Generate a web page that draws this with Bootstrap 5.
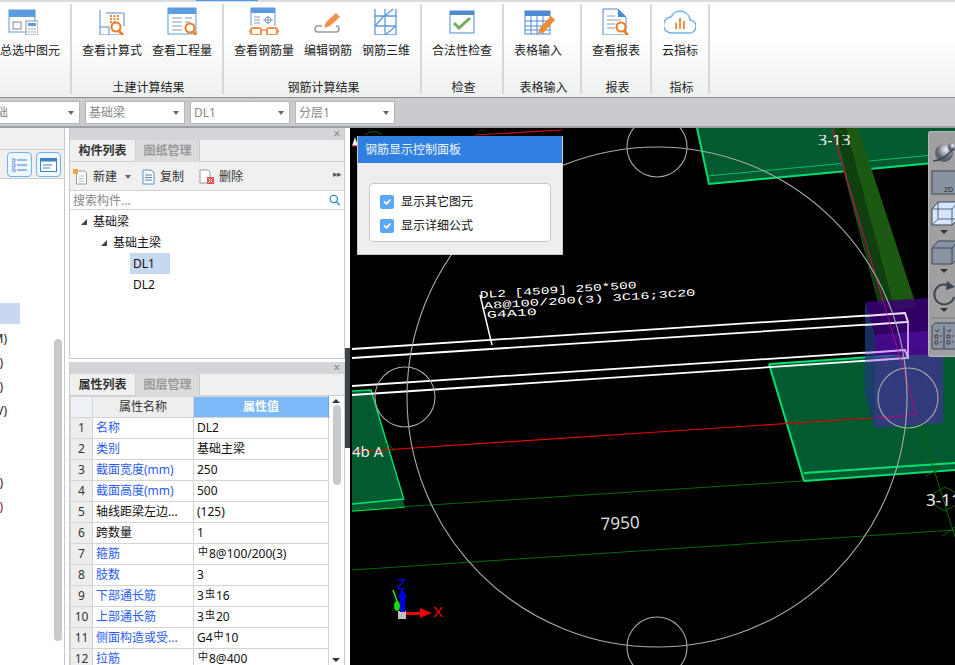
<!DOCTYPE html>
<html lang="en">
<head>
  <meta charset="UTF-8" />
  <title>钢筋计算结果</title>
  <meta name="viewport" content="width=device-width, initial-scale=1" />
  <link href="https://cdn.jsdelivr.net/npm/bootstrap@5.3.0/dist/css/bootstrap.min.css" rel="stylesheet"/>
  <style>
    html, body { height: 665px; overflow: hidden; }
    body { font-family: "Noto Sans", "Noto Sans CJK SC", sans-serif; font-size: 12px; line-height: 1.2; color: #222; background: #fff; }

    /* ribbon */
    .ribbon { height: 98px; border-top: 2px solid #dcdcdc; border-bottom: 1px solid #8c8f92; background: linear-gradient(#fff 35%, #eef0f0); position: relative; flex: none; }
    .ribbon-active { position: absolute; left: 196px; top: -2px; width: 62px; height: 1px; background: #4a9cf0; }
    .rb-group { border-right: 2px solid #d6d8d8; margin: 2px 0; padding: 0 10px; flex: none; height: 90px; position: relative; column-gap: 10px; }
    .rb-first { width: 72px; padding-left: 0; overflow: hidden; }
    .rb-table { width: 78px; padding-right: 0; }
    .rb-item { flex: none; white-space: nowrap; text-align: center; }
    .rb-item-table { width: 48px; }
    .rb-icon { display: block; height: 33px; margin: -2px auto 9px; }
    .rb-icon-first { margin-left: 20px; }
    .rb-icon-table { margin-left: 10px; }
    .rb-title { position: absolute; bottom: -1px; left: 3px; right: 0; text-align: center; height: 14px; line-height: 14px; color: #222; white-space: nowrap; }
    .rb-first .rb-item { margin-left: -12px; }

    /* combo row */
    .combo-bar { height: 30px; background: #c9cbce; border-bottom: 2px solid #9da1a4; padding: 3px 0 0; column-gap: 5px; flex: none; }
    .combo { width: 100px; height: 23px; background: #fff; border: 1px solid #b4b6b8; color: #888; padding: 1px 3px 0; }
    .combo-first { width: 80px; border-left: 0; padding-left: 0; }
    .combo-cut { margin-left: -4px; }
    .caret-down { width: 0; height: 0; border-left: 3px solid transparent; border-right: 3px solid transparent; border-top: 4px solid #666; flex: none; margin-right: 2px; }

    /* panels */
    .main-area { height: 537px; flex: none; }
    .left-pane { width: 65px; border-right: 1px solid #c8c8c8; position: relative; flex: none; }
    .left-head { height: 22px; background: #f0f0f0; border-bottom: 1px solid #ccc; }
    .left-tools { height: 29px; background: #f0f0f0; border-bottom: 1px solid #ccc; padding: 2px 0 0 7px; gap: 4px; }
    .view-btn { width: 25px; height: 25px; border: 1px solid #6fb2f2; border-radius: 4px; background: #eef6fe; }
    .left-rows { padding-top: 124px; }
    .left-row { height: 24px; width: 7px; overflow: hidden; white-space: nowrap; }
    .left-row-tight { width: 3px; }
    .left-row-dark { color: #80104a; }
    .left-row-sel { width: 20px; height: 21px; background: #c7d8f0; margin-bottom: 3px; }
    .left-scroll { position: absolute; left: 54px; top: 211px; width: 8px; height: 302px; border-radius: 4px; background: #c9c9c9; }

    .mid-pane { width: 276px; margin-left: 4px; flex: none; }
    .pane-top { height: 231px; border: 1px solid #c8cacc; border-top: 0; }
    .pane-bottom { height: 303px; margin-top: 3px; border-left: 1px solid #c8cacc; border-right: 1px solid #c8cacc; overflow: hidden; position: relative; }
    .pane-title { height: 12px; background: #d3d5d8; color: #888; font-size: 12px; line-height: 11px; text-align: right; padding-right: 4px; }
    .tab-row { height: 22px; background: #f0f0f0; border-bottom: 1px solid #d0d0d0; }
    .tab-on { width: 65px; height: 22px; font-weight: 700; text-align: center; line-height: 22px; color: #333; }
    .tab-off { width: 65px; height: 22px; text-align: center; line-height: 21px; color: #999; background: #dcdcdc; border-left: 1px solid #ccc; border-right: 1px solid #ccc; font-weight: 700; }
    .tool-row { height: 29px; background: #f0f0f0; border-bottom: 1px solid #d0d0d0; padding: 2px 0 0 3px; color: #333; position: relative; }
    .tool-more { position: absolute; right: 3px; top: 7px; font-size: 9px; color: #555; letter-spacing: -1px; }
    .tool-new-caret { margin-right: 11px; }
    .tool-copy { margin-right: 15px; }
    .search-row { height: 19px; border-bottom: 1px solid #d0d0d0; padding: 0 4px 0 3px; }
    .search-input { border: 0; padding: 2px 0 0; font-size: 12px; height: 18px; border-radius: 0; color: #333; box-shadow: none; background: transparent; font-family: inherit; }
    .search-input::placeholder { color: #888; }
    .tree-list { margin-top: 1px; }
    .tree-row { height: 21px; line-height: 21px; color: #111; }
    .tree-caret { width: 0; height: 0; border-left: 6px solid transparent; border-bottom: 6px solid #444; margin-right: 6px; flex: none; }
    .tree-lv1 { padding-left: 11px; }
    .tree-lv2 { padding-left: 31px; }
    .tree-leaf { margin-left: 60px; width: 40px; padding-left: 3px; }
    .tree-sel { background: #c7d8f0; }

    .prop-table { table-layout: fixed; width: 258px; font-size: 12px; border-color: #d4d4d4; }
    .prop-table > * > tr > * { height: 21px; padding: 0 3px; line-height: 20px; color: #111; white-space: nowrap; overflow: hidden; background: #fff; box-shadow: none; border-color: #d4d4d4; }
    .prop-table > thead > tr > th { font-weight: 400; text-align: center; background: #eee; color: #333; }
    .prop-table > thead > tr > th.col-value { background: #7db8f8; color: #fff; border-color: #5ea5ee; font-weight: 700; }
    .prop-table > tbody > tr > th { font-weight: 400; text-align: center; background: #eee; color: #333; padding: 0; }
    .prop-table > tbody > tr > td.prop-link { color: #2a5cf0; }
    .prop-table > thead > tr > th.col-corner { background: #eef2f7; }
    .col-num { width: 22px; }
    .col-name { width: 101px; }
    .col-val { width: 135px; }
    .rebar { font-size: 10px; position: relative; top: -3px; margin: 0 1px; }
    .prop-scroll { position: absolute; right: 0; top: 33px; width: 15px; bottom: 0; }
    .prop-thumb { position: absolute; left: 4px; top: 10px; width: 8px; height: 80px; border-radius: 4px; background: #c9c9c9; }
    .arrow-up, .arrow-dn { position: absolute; left: 3px; width: 0; height: 0; border-left: 4px solid transparent; border-right: 4px solid transparent; }
    .arrow-up { top: 4px; border-bottom: 4px solid #333; }
    .arrow-dn { bottom: 3px; border-top: 4px solid #333; }

    .split-gap { width: 5px; position: relative; flex: none; }
    .split-bar { position: absolute; left: 0; top: 220px; width: 5px; height: 100px; background: #3f444a; }

    /* canvas */
    .cad-view { background: #000; position: relative; overflow: hidden; }
    .cad-svg { display: block; }
    .rebar-panel { position: absolute; left: 7px; top: 8px; width: 206px; height: 119px; background: #eee; border: 1px solid #c8cad0; border-top: 0; }
    .rebar-head { height: 27px; background: #2f80e0; color: #f2f7fd; line-height: 27px; padding-left: 7px; }
    .rebar-box { margin: 20px 11px 0 11px; height: 59px; background: #fff; border: 1px solid #c8c8c8; border-radius: 4px; padding: 6px 0 0 10px; }
    .rebar-check { min-height: 0; height: 24px; padding: 0; margin: 0; gap: 7px; color: #111; }
    .rebar-check .form-check-input { width: 14px; height: 14px; margin: 0; float: none; background-color: #5aa9f8; border-color: #5aa9f8; border-radius: 2px; flex: none; }
    .view-tools { position: absolute; right: 0; top: 3px; width: 27px; height: 226px; background: #a0a0a2; border-radius: 3px 0 0 3px; border: 1px solid #b8b8b8; border-right: 0; }
  </style>
</head>
<body class="d-flex flex-column">

  <!-- ribbon -->
  <div class="ribbon d-flex">
    <div class="ribbon-active"></div>

    <div class="rb-group rb-first d-flex justify-content-end">
      <div class="rb-item">
        <svg class="rb-icon rb-icon-first" width="30" height="33" viewBox="0 0 30 33">
          <rect x="1" y="8" width="26" height="22" fill="#fff" stroke="#5b9be0"/><rect x="1" y="8" width="26" height="7" fill="#5b9be0"/>
          <rect x="5" y="20" width="8" height="7" fill="none" stroke="#888"/><rect x="18" y="19" width="12" height="14" fill="#fff" stroke="#8a8f94"/>
          <rect x="20" y="21" width="8" height="3" fill="#5b9be0"/><path d="M20 27h8M20 30h8" stroke="#999" stroke-dasharray="2 1"/>
        </svg>
        汇总选中图元
      </div>
      <div class="rb-title"></div>
    </div>

    <div class="rb-group d-flex">
      <div class="rb-item">
        <svg class="rb-icon" width="30" height="33" viewBox="0 0 30 33">
          <path d="M3 8v25h24" fill="none" stroke="#4d8ad0" stroke-width="1"/><path d="M3 25h9v8" fill="none" stroke="#4d8ad0"/>
          <path d="M9 11h18v13" fill="none" stroke="#4d8ad0"/><path d="M13 14h10M13 17h10M13 20h6" stroke="#f08a30" stroke-width="2" stroke-dasharray="2 1.5"/>
          <circle cx="19" cy="25" r="4.5" fill="#fff" stroke="#f07a20" stroke-width="2"/><path d="M22 29l4 4" stroke="#f07a20" stroke-width="2.5"/>
        </svg>
        查看计算式
      </div>
      <div class="rb-item">
        <svg class="rb-icon" width="30" height="33" viewBox="0 0 30 33">
          <rect x="1" y="6" width="28" height="26" fill="#fff" stroke="#5b9be0"/><rect x="1" y="6" width="28" height="6" fill="#5b9be0"/>
          <path d="M5 16h10M5 20h10M5 24h10M5 28h10M18 16h7M18 20h5" stroke="#7d9cb8"/>
          <circle cx="23" cy="26" r="4.5" fill="#fff" stroke="#f07a20" stroke-width="2"/><path d="M26 29l3 4" stroke="#f07a20" stroke-width="2.5"/>
        </svg>
        查看工程量
      </div>
      <div class="rb-title">土建计算结果</div>
    </div>

    <div class="rb-group d-flex">
      <div class="rb-item">
        <svg class="rb-icon" width="30" height="33" viewBox="0 0 30 33">
          <path d="M2 6h24v18M2 6v18" fill="none" stroke="#5b9be0"/><rect x="2" y="6" width="24" height="5" fill="#5b9be0"/>
          <path d="M5 15h6M5 18h6M5 21h6" stroke="#7d9cb8"/><path d="M14 18h10M19 14v8" stroke="#7d9cb8"/>
          <circle cx="19" cy="18" r="3" fill="none" stroke="#7d9cb8"/>
          <rect x="2" y="26" width="10" height="7" rx="2" fill="#fff" stroke="#f4924a" stroke-width="2"/><rect x="18" y="26" width="10" height="7" rx="2" fill="#fff" stroke="#f4924a" stroke-width="2"/>
          <path d="M12 28h6M2 27l-2 3M28 27l2 3" stroke="#f4924a" stroke-width="1.5"/>
        </svg>
        查看钢筋量
      </div>
      <div class="rb-item">
        <svg class="rb-icon" width="30" height="33" viewBox="0 0 30 33">
          <path d="M9 24h-4q-3 0 -3 3t3 3h18q3 0 3 -3t-3 -3" fill="none" stroke="#9a9a9a" stroke-width="1.5"/>
          <path d="M11 26l2-6 10-9 4 4-10 9z" fill="#f4924a"/>
        </svg>
        编辑钢筋
      </div>
      <div class="rb-item">
        <svg class="rb-icon" width="30" height="33" viewBox="0 0 30 33">
          <path d="M4 7v27M14 7v27M25 7v27M4 14h21M4 24h21M4 33h21M4 24l9-10h12M14 33l11-9M14 14l8-7" fill="none" stroke="#5b9be0" stroke-width="1.3"/>
        </svg>
        钢筋三维
      </div>
      <div class="rb-title">钢筋计算结果</div>
    </div>

    <div class="rb-group">
      <div class="rb-item">
        <svg class="rb-icon" width="26" height="33" viewBox="0 0 26 33">
          <rect x="1" y="9" width="24" height="22" fill="#fff" stroke="#4d8ad0"/><rect x="1" y="9" width="24" height="4" fill="#4d8ad0"/>
          <path d="M5 21l5 5 11-10" fill="none" stroke="#6fae5a" stroke-width="3"/>
        </svg>
        合法性检查
      </div>
      <div class="rb-title">检查</div>
    </div>

    <div class="rb-group rb-table">
      <div class="rb-item rb-item-table">
        <svg class="rb-icon rb-icon-table" width="34" height="33" viewBox="0 0 34 33">
          <rect x="1" y="9" width="25" height="23" fill="#fff" stroke="#4d8ad0"/><rect x="1" y="9" width="25" height="5" fill="#4d8ad0"/>
          <path d="M1 19h25M1 24h25M1 28h25M7 14v18M13 14v18M19 14v18" stroke="#4d8ad0"/>
          <path d="M14 32l2-6 11-12 4 4-11 12z" fill="#f08a30"/>
        </svg>
        表格输入
      </div>
      <div class="rb-title">表格输入</div>
    </div>

    <div class="rb-group">
      <div class="rb-item">
        <svg class="rb-icon" width="28" height="33" viewBox="0 0 28 33">
          <path d="M1 7h15l8 8v18H1z" fill="#fff" stroke="#4d8ad0"/><path d="M16 7l8 8h-8z" fill="#4d8ad0"/>
          <path d="M5 14h8M5 18h14M5 22h8M5 26h8" stroke="#8a9cb0"/>
          <circle cx="19" cy="25" r="4.5" fill="#fff" stroke="#f07a20" stroke-width="2"/><path d="M22 29l4 4" stroke="#f07a20" stroke-width="2.5"/>
        </svg>
        查看报表
      </div>
      <div class="rb-title">报表</div>
    </div>

    <div class="rb-group">
      <div class="rb-item">
        <svg class="rb-icon" width="32" height="33" viewBox="0 0 32 33">
          <path d="M8 31h17a6 6 0 0 0 1-13 10 10 0 0 0-19-3 8 8 0 0 0 1 16z" fill="#fff" stroke="#6fb2f2" stroke-width="1.5"/>
          <path d="M12 21v6M16 16v11M20 19v8" stroke="#f0904a" stroke-width="2"/>
        </svg>
        云指标
      </div>
      <div class="rb-title">指标</div>
    </div>
  </div>

  <!-- floor / type selectors -->
  <div class="combo-bar d-flex">
    <div class="combo combo-first d-flex align-items-center justify-content-between"><span class="combo-cut">础</span><i class="caret-down"></i></div>
    <div class="combo d-flex align-items-center justify-content-between"><span>基础梁</span><i class="caret-down"></i></div>
    <div class="combo d-flex align-items-center justify-content-between"><span>DL1</span><i class="caret-down"></i></div>
    <div class="combo d-flex align-items-center justify-content-between"><span>分层1</span><i class="caret-down"></i></div>
  </div>

  <div class="main-area d-flex">

    <!-- navigation pane, mostly off screen -->
    <div class="left-pane">
      <div class="left-head"></div>
      <div class="left-tools d-flex">
        <div class="view-btn d-flex align-items-center justify-content-center">
          <svg width="15" height="14" viewBox="0 0 15 14"><path d="M0 1h3v3h-3zM0 6h3v3h-3zM0 11h3v3h-3z" fill="none" stroke="#3f80c8" stroke-width=".8"/><path d="M5 2h10M5 7h10M5 12h10" stroke="#3f80c8"/></svg>
        </div>
        <div class="view-btn d-flex align-items-center justify-content-center">
          <svg width="17" height="14" viewBox="0 0 17 14"><rect x=".5" y=".5" width="16" height="13" fill="#fff" stroke="#3f80c8"/><rect x=".5" y=".5" width="16" height="3" fill="#3f80c8"/><path d="M3 7h9M3 10h7" stroke="#3f80c8"/></svg>
        </div>
      </div>
      <div class="left-rows">
        <div class="left-row-sel"></div>
        <div class="left-row d-flex justify-content-end align-items-center">(M)</div>
        <div class="left-row left-row-tight d-flex justify-content-end align-items-center">)</div>
        <div class="left-row left-row-tight d-flex justify-content-end align-items-center">)</div>
        <div class="left-row d-flex justify-content-end align-items-center">(V)</div>
        <div class="left-row"></div>
        <div class="left-row"></div>
        <div class="left-row left-row-tight d-flex justify-content-end align-items-center">)</div>
        <div class="left-row left-row-tight left-row-dark d-flex justify-content-end align-items-center">)</div>
      </div>
      <div class="left-scroll"></div>
    </div>

    <div class="mid-pane">
      <!-- component list -->
      <div class="pane-top">
        <div class="pane-title">×</div>
        <div class="tab-row d-flex">
          <div class="tab-on">构件列表</div>
          <div class="tab-off">图纸管理</div>
        </div>
        <div class="tool-row d-flex align-items-center">
          <svg width="16" height="16" viewBox="0 0 16 16" class="me-1"><path d="M3.500 2h8l2 2v11h-10z" fill="#fff" stroke="#999"/><path d="M5.500 7h6M5.500 9.500h6M5.500 12h6" stroke="#bbb"/><rect x="0" y="0" width="5" height="5" fill="#f4a040"/></svg>
          <span>新建</span><i class="caret-down ms-2 tool-new-caret"></i>
          <svg width="14" height="16" viewBox="0 0 14 16" class="me-1"><path d="M1 1h8l3 3v11h-11z" fill="#fff" stroke="#5b8fc8"/><path d="M3 6h7M3 8.500h7M3 11h7" stroke="#4d80c0"/></svg>
          <span class="tool-copy">复制</span>
          <svg width="16" height="16" viewBox="0 0 16 16" class="me-1"><path d="M1 1h8l2 2v11h-10z" fill="#fff" stroke="#999"/><rect x="8" y="8" width="7" height="7" fill="#d9534f"/><path d="M9.500 9.500l4 4M13.500 9.500l-4 4" stroke="#fff"/></svg>
          <span>删除</span>
          <span class="tool-more">▸▸</span>
        </div>
        <div class="search-row d-flex align-items-center">
          <input class="form-control search-input" type="text" placeholder="搜索构件...">
          <svg width="12" height="12" viewBox="0 0 12 12" class="flex-none"><circle cx="5" cy="5" r="3.800" fill="none" stroke="#2a8ad0" stroke-width="1.300"/><path d="M8 8l3.500 3.500" stroke="#2a8ad0" stroke-width="1.500"/></svg>
        </div>
        <div class="tree-list">
          <div class="tree-row tree-lv1 d-flex align-items-center"><i class="tree-caret"></i>基础梁</div>
          <div class="tree-row tree-lv2 d-flex align-items-center"><i class="tree-caret"></i>基础主梁</div>
          <div class="tree-row tree-leaf tree-sel">DL1</div>
          <div class="tree-row tree-leaf">DL2</div>
        </div>
      </div>

      <!-- properties -->
      <div class="pane-bottom">
        <div class="pane-title">×</div>
        <div class="tab-row d-flex">
          <div class="tab-on">属性列表</div>
          <div class="tab-off">图层管理</div>
        </div>
        <table class="table table-bordered prop-table mb-0">
          <colgroup><col class="col-num"><col class="col-name"><col class="col-val"></colgroup>
          <thead>
            <tr><th class="col-corner"></th><th>属性名称</th><th class="col-value">属性值</th></tr>
          </thead>
          <tbody>
            <tr><th>1</th><td class="prop-link">名称</td><td>DL2</td></tr>
            <tr><th>2</th><td class="prop-link">类别</td><td>基础主梁</td></tr>
            <tr><th>3</th><td class="prop-link">截面宽度(mm)</td><td>250</td></tr>
            <tr><th>4</th><td class="prop-link">截面高度(mm)</td><td>500</td></tr>
            <tr><th>5</th><td>轴线距梁左边...</td><td>(125)</td></tr>
            <tr><th>6</th><td>跨数量</td><td>1</td></tr>
            <tr><th>7</th><td class="prop-link">箍筋</td><td><span class="rebar">中</span>8@100/200(3)</td></tr>
            <tr><th>8</th><td class="prop-link">肢数</td><td>3</td></tr>
            <tr><th>9</th><td class="prop-link">下部通长筋</td><td>3<span class="rebar">虫</span>16</td></tr>
            <tr><th>10</th><td class="prop-link">上部通长筋</td><td>3<span class="rebar">虫</span>20</td></tr>
            <tr><th>11</th><td class="prop-link">侧面构造或受...</td><td>G4<span class="rebar">中</span>10</td></tr>
            <tr><th>12</th><td class="prop-link">拉筋</td><td><span class="rebar">中</span>8@400</td></tr>
          </tbody>
        </table>
        <div class="prop-scroll"><i class="arrow-up"></i><div class="prop-thumb"></div><i class="arrow-dn"></i></div>
      </div>
    </div>

    <div class="split-gap"><div class="split-bar"></div></div>

    <!-- 3d drawing -->
    <div class="cad-view flex-grow-1">
      <svg class="cad-svg" width="605" height="537" viewBox="350 128 605 537">
        <defs><clipPath id="topLabel"><rect x="810" y="135" width="50" height="10"/></clipPath></defs>
        <!-- slabs -->
        <polygon points="697,128 955,128 955,161 709,184" fill="#025a30"/>
        <path d="M697 128L709 184L955 161" fill="none" stroke="#00e070" stroke-width="2"/>
        <path d="M707 176L955 153" fill="none" stroke="#00c060" stroke-width="1"/>
        <polygon points="769,364 955,351 955,470 804,481" fill="#025a30"/>
        <path d="M804 473L955 463M804 481L955 470M769 364L804 481" fill="none" stroke="#00e070" stroke-width="2"/>
        <path d="M769 364L900 355" stroke="#00e070" stroke-width="2"/>
        <polygon points="352,391 371,390 405,507 352,511" fill="#025a30"/>
        <path d="M352 391L371 390L404 500M352 504L404 499M352 511L405 507" fill="none" stroke="#00e070" stroke-width="1.500"/>
        <!-- column / green band -->
        <polygon points="832,128 858,128 917,308 880,310" fill="#1c5a14"/>
        <polygon points="835,128 846,128 895,310 880,310" fill="#103f10"/>
        <!-- axis lines -->
        <path d="M352 510L803 481M352 570L955 530" stroke="#006a00" stroke-width="1"/>
        <path d="M917 415L955 537M926 476L945 466M943 536L955 527" stroke="#006a00" stroke-width="1"/>
        <path d="M832 129L917 415" stroke="#a02010" stroke-width="1"/>
        <path d="M352 452L917 415" stroke="#e00000" stroke-width="1.200"/>
        <path d="M475 135L562 130" stroke="#e00000" stroke-width="1.200"/>
        <path d="M355 137L352 146H358z" fill="#eee"/><path d="M352 146H358" stroke="#e00000"/>
        <!-- beams -->
        <path d="M352 349L905 313L908 322L352 358M352 386L905 350L908 358L352 395M908 322V358" fill="none" stroke="#fff" stroke-width="1.800"/>
        <path d="M480 295L492 345" stroke="#fff" stroke-width="1.500"/>
        <!-- purple column -->
        <polygon points="865,302 928,298 955,298 955,355 875,335" fill="#3a0075" fill-opacity=".85"/>
        <polygon points="865,302 875,335 875,428 865,395" fill="#1e3a78" fill-opacity=".8"/>
        <polygon points="875,335 943,330 943,423 875,428" fill="#45309a" fill-opacity=".72"/>
        <polygon points="875,335 943,330 943,355 875,355" fill="#4a0090" fill-opacity=".7"/>
        <path d="M865 316L905 313L908 322L865 325" fill="none" stroke="#f0e4ff" stroke-width="1.800"/>
        <path d="M865 353L905 350L908 358L865 361M908 322V358" fill="none" stroke="#d8a8ff" stroke-width="1.800"/>
        <path d="M832 129L917 415L878 418" fill="none" stroke="#c00090" stroke-width="1" stroke-opacity=".7"/>
        <!-- grid circles -->
        <g fill="none" stroke="#aaa" stroke-width="1.100">
          <circle cx="657" cy="397" r="250"/>
          <circle cx="657" cy="147" r="30"/>
          <circle cx="657" cy="647" r="30"/>
          <circle cx="405" cy="397" r="30"/>
          <circle cx="908" cy="398" r="30"/>
        </g>
        <!-- labels -->
        <polygon points="945,487 956,493 956,505 945,511 934,505 934,493" fill="none" stroke="#006a00"/>
        <path d="M372 451a12 12 0 0 1 22 0M820 134a12 12 0 0 1 22 0M365 135a12 12 0 0 1 17 0" fill="none" stroke="#006a00"/>
        <text x="926" y="506" font-size="17" fill="#eee" font-family="Noto Sans">3-11</text>
        <text x="818" y="146" font-size="16" fill="#eee" font-family="Noto Sans" clip-path="url(#topLabel)">3-13</text>
        <text x="352" y="457" font-size="15" fill="#eee" font-family="Noto Sans">4b A</text>
        <text transform="translate(480 298) rotate(-3.600)" font-size="10" fill="#fff" font-family="Liberation Mono" textLength="157" lengthAdjust="spacingAndGlyphs">DL2 [4509] 250*500</text>
        <text transform="translate(484 309) rotate(-3.600)" font-size="10" fill="#fff" font-family="Liberation Mono" textLength="212" lengthAdjust="spacingAndGlyphs">A8@100/200(3) 3C16;3C20</text>
        <text transform="translate(487 318) rotate(-3.600)" font-size="10" fill="#fff" font-family="Liberation Mono" textLength="50" lengthAdjust="spacingAndGlyphs">G4A10</text>
        <text transform="translate(601 530) rotate(-3)" font-size="17" fill="#ddd" font-family="Noto Sans">7950</text>
        <!-- axis gizmo -->
        <path d="M393 590L398 604" stroke="#30e030" stroke-width="1.500"/>
        <ellipse cx="397" cy="606" rx="3" ry="5" fill="#10e010"/>
        <rect x="398" y="611" width="8" height="8" fill="#c0c0c0"/>
        <path d="M406 612H420V608L432 613L420 618V615H406z" fill="#f00000"/>
        <path d="M400 612V598H398L402 588L407 598H405V612z" fill="#0000e8"/>
        <text x="397" y="589" font-size="15" fill="#0000f0" font-family="Liberation Sans">Z</text>
        <text x="433" y="617" font-size="15" fill="#f00000" font-family="Liberation Sans">X</text>
      </svg>

      <div class="rebar-panel">
        <div class="rebar-head">钢筋显示控制面板</div>
        <div class="rebar-box">
          <label class="form-check rebar-check d-flex align-items-center"><input class="form-check-input" type="checkbox" checked>显示其它图元</label>
          <label class="form-check rebar-check d-flex align-items-center"><input class="form-check-input" type="checkbox" checked>显示详细公式</label>
        </div>
      </div>

      <div class="view-tools">
        <svg width="27" height="226" viewBox="0 0 27 226" class="d-block">
          <defs><radialGradient id="ballFill" cx=".6" cy=".3"><stop offset="0" stop-color="#f4f4f8"/><stop offset="1" stop-color="#5a6270"/></radialGradient></defs>
          <circle cx="15" cy="21" r="9" fill="url(#ballFill)"/><circle cx="23" cy="15" r="4" fill="url(#ballFill)"/>
          <path d="M4 29q10 0 20-12" fill="none" stroke="#3d4654" stroke-width="1.500"/>
          <rect x="3" y="39" width="26" height="23" fill="#8a93a3" stroke="#3d4654"/>
          <text x="15" y="60" font-size="7" fill="#222" font-family="Liberation Sans">2D</text>
          <path d="M3 77l6-7h20v17l-6 6H3z" fill="#d4e6fb" stroke="#3d4654"/><path d="M3 77h20v16M23 77l6-7M9 70v17h20M3 93l6-6" fill="none" stroke="#3d4654" stroke-width=".8"/>
          <path d="M11 98h8l-4 4z" fill="#333"/>
          <path d="M3 116l6-7h20v17l-6 6H3z" fill="#8a93a3" stroke="#3d4654"/><path d="M3 116h20v16M23 116l6-7" fill="none" stroke="#3d4654"/>
          <path d="M11 137h8l-4 4z" fill="#333"/>
          <path d="M25 165a10 10 0 1 1 -3 -10" fill="none" stroke="#3d4654" stroke-width="2"/><path d="M18 149l8 6-9 3z" fill="#3d4654"/>
          <path d="M11 176h8l-4 4z" fill="#333"/>
          <path d="M2 186H27" stroke="#777"/>
          <path d="M3 194l3-3h24v26H3z" fill="#8a93a3" stroke="#3d4654"/>
          <path d="M15 194v22M6 198l2 2 2-3M18 198l2 2 2-3" fill="none" stroke="#222" stroke-width=".8"/>
          <path d="M6 203h3v3h-3zM6 209h3v3h-3zM18 203h3v3h-3zM18 209h3v3h-3zM11 204h2M11 210h2M23 204h2M23 210h2" fill="none" stroke="#222" stroke-width=".7"/>
        </svg>
      </div>
    </div>
  </div>

  <script src="https://cdn.jsdelivr.net/npm/bootstrap@5.3.0/dist/js/bootstrap.bundle.min.js"></script>
</body>
</html>
